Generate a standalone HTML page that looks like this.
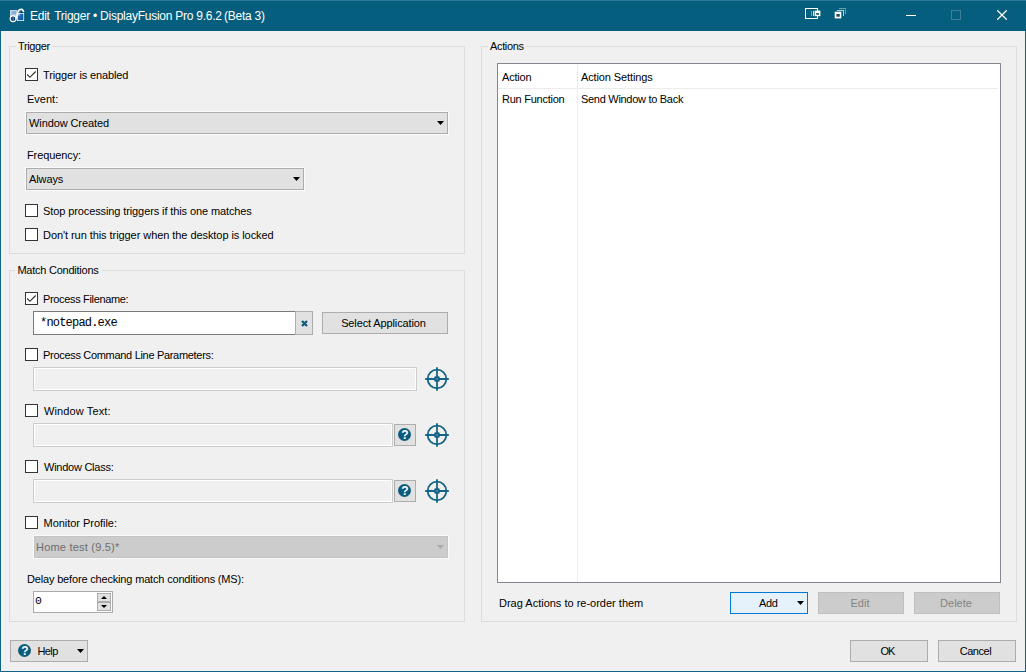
<!DOCTYPE html>
<html><head><meta charset="utf-8"><title>Edit Trigger</title>
<style>
*{box-sizing:border-box;margin:0;padding:0}
html,body{width:1026px;height:672px;overflow:hidden;background:#f0f0f0}
body{font-family:"Liberation Sans",sans-serif;font-size:11px;color:#000;position:relative}
.abs,.t,.gb,.cb,.combo,.btn,.inp,svg{position:absolute}
#win{position:absolute;left:0;top:0;width:1026px;height:672px;border:1px solid #0f6386;border-top:none;background:#f0f0f0}
#title{position:absolute;left:0;top:0;width:1026px;height:31px;background:#055e7e;border-top:1px solid #2a7896}
#title .cap{position:absolute;left:30px;top:8px;font-size:12px;color:#fff;white-space:nowrap;line-height:14px}
.t{white-space:nowrap;line-height:15px;height:15px}
.gb{border:1px solid #dcdcdc}
.gl{position:absolute;background:#f0f0f0;padding:0 2px;white-space:nowrap;line-height:15px}
.cb{width:13px;height:13px;border:1px solid #333;background:#fff}
.combo{box-shadow:0 0 0 1px #fbfbfb;background:#e1e1e1;border:1px solid #adadad;height:22px;line-height:20px;padding-left:2px;white-space:nowrap}
.arr{position:absolute;width:7px;height:4px;background:#000;clip-path:polygon(0 0,100% 0,50% 100%)}
.btn{background:#e1e1e1;border:1px solid #adadad;height:22px;line-height:20px;text-align:center;white-space:nowrap}
.btn.dis{background:#cccccc;border-color:#bfbfbf;color:#838383}
.inp{background:#fff;border:1px solid #7a7a7a;height:24px}
.inp.dis{background:#f0f0f0;border-color:#cccccc;box-shadow:inset 0 0 0 1px #fff}
.mono{font-family:"Liberation Mono",monospace}
.q{position:absolute;width:13px;height:13px;border-radius:50%;background:#0c5b7e;color:#fff;font-weight:bold;font-size:12px;line-height:14px;text-align:center}
.chk{left:0;top:0;width:11px;height:11px}
</style></head><body>
<div id="win"></div>
<div id="title"><div class="cap"><span class="x" style="letter-spacing:-0.25px">Edit <span style="position:relative;left:1.6px">Trigger • DisplayFusion Pro 9.6.2</span> <span style="position:relative;left:0.8px">(Beta 3)</span></span></div></div>


<svg style="left:8px;top:6px;width:20px;height:18px" viewBox="0 0 20 18">
<defs><linearGradient id="g1" x1="0" y1="0" x2="1" y2="1"><stop offset="0" stop-color="#a3c6e9"/><stop offset="1" stop-color="#5f93d0"/></linearGradient>
<linearGradient id="g2" x1="0" y1="0" x2="1" y2="1"><stop offset="0" stop-color="#2c7fce"/><stop offset="1" stop-color="#0e4c9a"/></linearGradient></defs>
<rect x="2.5" y="4.4" width="6.3" height="6.6" fill="url(#g1)" stroke="#dde8f2" stroke-width="0.8"/>
<rect x="9.4" y="7.5" width="6.3" height="7.1" fill="url(#g2)" stroke="#eef3f6" stroke-width="0.8"/>
<path d="M10.9 7.1L11.2 5.4L12.7 4.4L12.7 7.1Z" fill="#3b78b5"/>
<path d="M12.7 4.4C13.8 4.3 14.6 5.2 14.7 7.1L12.7 7.1Z" fill="#053a55"/>
<ellipse cx="5.1" cy="12.75" rx="2.95" ry="2.8" fill="#0f4379" stroke="#f6f5ef" stroke-width="1.2"/>
<path d="M5.2 10.6V14.4" stroke="#79a6d4" stroke-width="0.7" fill="none"/>
<path d="M8 13.4C8.7 10.8 9 8.2 9.9 6C10.7 4 12.4 3.2 13.7 3.4C15.1 3.7 15.5 4.7 15.5 6.3" fill="none" stroke="#f6f5ef" stroke-width="1.6"/>
<path d="M3.4 9.2L11.8 8.8" stroke="#f6f5ef" stroke-width="1.15" fill="none"/>
</svg>
<svg style="left:804px;top:7px;width:18px;height:14px" viewBox="0 0 18 14" shape-rendering="crispEdges">
<rect x="1.5" y="1.5" width="12" height="10" fill="none" stroke="#fff" stroke-width="1"/>
<rect x="7" y="4" width="1" height="5" fill="#fff" opacity="0.45"/>
<rect x="9" y="4" width="1" height="5" fill="#fff" opacity="0.85"/>
<rect x="10.6" y="3.6" width="5.8" height="5.6" fill="#fff" shape-rendering="auto"/>
<rect x="12.1" y="6.1" width="2.9" height="1.6" fill="#1b4f66" shape-rendering="auto"/>
</svg>
<svg style="left:834px;top:7px;width:13px;height:13px" viewBox="0 0 13 13" shape-rendering="crispEdges">
<path d="M5 1.5H11.5V7" fill="none" stroke="#fff" stroke-width="1" opacity="0.4"/>
<path d="M3 3.5H9.5V9" fill="none" stroke="#fff" stroke-width="1" opacity="0.7"/>
<rect x="0.7" y="4.7" width="6.6" height="6.7" fill="#fff" shape-rendering="auto"/>
<rect x="2.4" y="7" width="3.4" height="2.7" fill="#1b4f66" shape-rendering="auto"/>
</svg>
<svg style="left:906px;top:15px;width:10px;height:1px" viewBox="0 0 10 1"><rect width="10" height="1" fill="#fff"/></svg>
<svg style="left:951px;top:10px;width:10px;height:10px" viewBox="0 0 10 10" shape-rendering="crispEdges"><rect x="0.5" y="0.5" width="9" height="9" fill="none" stroke="#3f8099" stroke-width="1"/></svg>
<svg style="left:997px;top:10px;width:10px;height:10px" viewBox="0 0 10 10"><path d="M0.2 0.2L9.8 9.8M9.8 0.2L0.2 9.8" stroke="#fff" stroke-width="1.25" fill="none"/></svg>

<!-- Trigger group -->
<div class="gb" style="left:9px;top:46px;width:456px;height:208px"></div>
<div class="gl" style="left:16px;top:39px"><span class="x" style="letter-spacing:-0.36px">Trigger</span></div>
<div class="cb" style="left:25px;top:68px"><svg class="chk" viewBox="0 0 11 11"><path d="M1.2 5.5 L3.9 8.3 L9.7 2.5" fill="none" stroke="#2b2b2b" stroke-width="1.1"/></svg></div>
<div class="t" style="left:43px;top:68px"><span class="x" style="letter-spacing:-0.13px">Trigger is enabled</span></div>
<div class="t" style="left:27px;top:92px"><span class="x">Event:</span></div>
<div class="combo" style="left:26px;top:112px;width:422px"><span class="x" style="letter-spacing:-0.1px">Window Created</span><i class="arr" style="left:410px;top:8px"></i></div>
<div class="t" style="left:27px;top:148px"><span class="x" style="letter-spacing:-0.1px">Frequency:</span></div>
<div class="combo" style="left:26px;top:168px;width:278px"><span class="x" style="letter-spacing:-0.1px">Always</span><i class="arr" style="left:266px;top:8px"></i></div>
<div class="cb" style="left:25px;top:204px"></div>
<div class="t" style="left:43px;top:204px"><span class="x" style="letter-spacing:-0.105px">Stop processing triggers if this one matches</span></div>
<div class="cb" style="left:25px;top:228px"></div>
<div class="t" style="left:43px;top:228px"><span class="x" style="letter-spacing:-0.065px">Don't run this trigger when the desktop is locked</span></div>

<!-- Match group -->
<div class="gb" style="left:9px;top:270px;width:456px;height:352px"></div>
<div class="gl" style="left:15.4px;top:263px"><span class="x" style="letter-spacing:-0.24px">Match Conditions</span></div>
<div class="cb" style="left:25px;top:292px"><svg class="chk" viewBox="0 0 11 11"><path d="M1.2 5.5 L3.9 8.3 L9.7 2.5" fill="none" stroke="#2b2b2b" stroke-width="1.1"/></svg></div>
<div class="t" style="left:43px;top:292px"><span class="x" style="letter-spacing:-0.34px">Process Filename:</span></div>
<div class="inp" style="left:33px;top:311px;width:263px"></div>
<div class="t mono" style="left:40px;top:316px;font-size:12px"><span class="x" style="letter-spacing:-0.8px">*notepad.exe</span></div>
<div class="btn" style="left:295px;top:311px;width:18px;height:24px"><svg style="left:5px;top:8px;width:7px;height:7px" viewBox="0 0 7 7"><path d="M1 1 L6 6 M6 1 L1 6" stroke="#0c5b7e" stroke-width="2.2" fill="none"/></svg></div>
<div class="btn" style="left:322px;top:312px;width:126px"><span class="x" style="letter-spacing:-0.12px;position:relative;left:-1.5px">Select Application</span></div>
<div class="cb" style="left:25px;top:348px"></div>
<div class="t" style="left:43px;top:348px"><span class="x" style="letter-spacing:-0.31px">Process Command Line Parameters:</span></div>
<div class="inp dis" style="left:33px;top:367px;width:384px"></div>
<div class="cb" style="left:25px;top:404px"></div>
<div class="t" style="left:44px;top:404px"><span class="x" style="letter-spacing:0.12px">Window Text:</span></div>
<div class="inp dis" style="left:33px;top:423px;width:360px"></div>
<div class="btn" style="left:394px;top:424px;width:22px"><div class="q" style="left:3.4px;top:3.3px">?</div></div>
<div class="cb" style="left:25px;top:460px"></div>
<div class="t" style="left:44px;top:460px"><span class="x" style="letter-spacing:-0.25px">Window Class:</span></div>
<div class="inp dis" style="left:33px;top:479px;width:360px"></div>
<div class="btn" style="left:394px;top:480px;width:22px"><div class="q" style="left:3.4px;top:3.3px">?</div></div>
<svg style="left:425px;top:367px;width:24px;height:24px" viewBox="0 0 24 24"><g fill="none" stroke="#146585" stroke-width="1.8"><circle cx="12" cy="12" r="9.3"/><path d="M0.2 12H23.8M12 0.2V23.8"/></g><rect x="9.3" y="9.3" width="5.4" height="5.4" rx="1.2" fill="#146585"/><rect x="11" y="11" width="2" height="2" fill="#3b86a6"/></svg><svg style="left:425px;top:423px;width:24px;height:24px" viewBox="0 0 24 24"><g fill="none" stroke="#146585" stroke-width="1.8"><circle cx="12" cy="12" r="9.3"/><path d="M0.2 12H23.8M12 0.2V23.8"/></g><rect x="9.3" y="9.3" width="5.4" height="5.4" rx="1.2" fill="#146585"/><rect x="11" y="11" width="2" height="2" fill="#3b86a6"/></svg><svg style="left:425px;top:479px;width:24px;height:24px" viewBox="0 0 24 24"><g fill="none" stroke="#146585" stroke-width="1.8"><circle cx="12" cy="12" r="9.3"/><path d="M0.2 12H23.8M12 0.2V23.8"/></g><rect x="9.3" y="9.3" width="5.4" height="5.4" rx="1.2" fill="#146585"/><rect x="11" y="11" width="2" height="2" fill="#3b86a6"/></svg>
<div class="cb" style="left:25px;top:516px"></div>
<div class="t" style="left:43.6px;top:516px"><span class="x" style="letter-spacing:-0.04px">Monitor Profile:</span></div>
<div class="combo" style="left:34px;top:536px;width:414px;background:#cccccc;border-color:#c4c4c4;color:#6d6d6d;padding-left:1px"><span class="x" style="letter-spacing:0.21px">Home test (9.5)*</span><i class="arr" style="left:402px;top:8px;background:#a9a9a9"></i></div>
<div class="t" style="left:27px;top:572px"><span class="x" style="letter-spacing:-0.17px">Delay before checking match conditions (MS):</span></div>
<div class="inp" style="left:33px;top:591px;width:80px;height:22px;border-color:#ababab"></div>
<div class="t mono" style="left:35px;top:593px;font-size:11.5px"><span class="x">0</span></div>
<div class="btn" style="left:97px;top:593px;width:14px;height:9px"><svg style="left:3px;top:2px;width:6px;height:3px" viewBox="0 0 6 3"><path d="M0 3L3 0L6 3Z" fill="#000"/></svg></div>
<div class="btn" style="left:97px;top:602px;width:14px;height:9px"><svg style="left:3px;top:2px;width:6px;height:3px" viewBox="0 0 6 3"><path d="M0 0L3 3L6 0Z" fill="#000"/></svg></div>

<div class="btn" style="left:10px;top:640px;width:78px;text-align:left;padding-left:26.4px"><div class="q" style="left:7.4px;top:3.4px">?</div><span class="x" style="letter-spacing:-0.55px">Help</span><i class="arr" style="left:66px;top:8px"></i></div>

<!-- Actions group -->
<div class="gb" style="left:481px;top:46px;width:536px;height:576px"></div>
<div class="gl" style="left:488px;top:39px"><span class="x" style="letter-spacing:-0.35px">Actions</span></div>
<div class="abs" style="left:497px;top:63px;width:504px;height:520px;background:#fff;border:1px solid #828790"></div>
<div class="abs" style="left:498px;top:88px;width:500px;height:1px;background:#ececec"></div>
<div class="abs" style="left:577px;top:64px;width:1px;height:24px;background:#ececec"></div><div class="abs" style="left:577px;top:89px;width:1px;height:493px;background:#e5f0f8"></div>
<div class="t" style="left:502px;top:70px"><span class="x" style="letter-spacing:-0.18px">Action</span></div>
<div class="t" style="left:581px;top:70px"><span class="x" style="letter-spacing:-0.12px">Action Settings</span></div>
<div class="t" style="left:502px;top:92px"><span class="x" style="letter-spacing:-0.25px">Run Function</span></div>
<div class="t" style="left:581px;top:92px"><span class="x" style="letter-spacing:-0.29px">Send Window to Back</span></div>
<div class="t" style="left:499px;top:596px"><span class="x">Drag Actions to re-order them</span></div>
<div class="btn" style="left:730px;top:592px;width:78px;background:#e5f1fb;border-color:#0078d7;text-align:left;padding-left:28px"><span class="x" style="letter-spacing:-0.3px">Add</span><i class="arr" style="left:66px;top:8px"></i></div>
<div class="btn dis" style="left:818px;top:592px;width:86px"><span class="x" style="position:relative;left:-1px">Edit</span></div>
<div class="btn dis" style="left:914px;top:592px;width:86px"><span class="x" style="position:relative;left:-1px">Delete</span></div>
<div class="btn" style="left:850px;top:640px;width:78px"><span class="x" style="letter-spacing:-1.1px;position:relative;left:-1.6px">OK</span></div>
<div class="btn" style="left:938px;top:640px;width:78px"><span class="x" style="letter-spacing:-0.46px;position:relative;left:-1.6px">Cancel</span></div>
</body></html>
